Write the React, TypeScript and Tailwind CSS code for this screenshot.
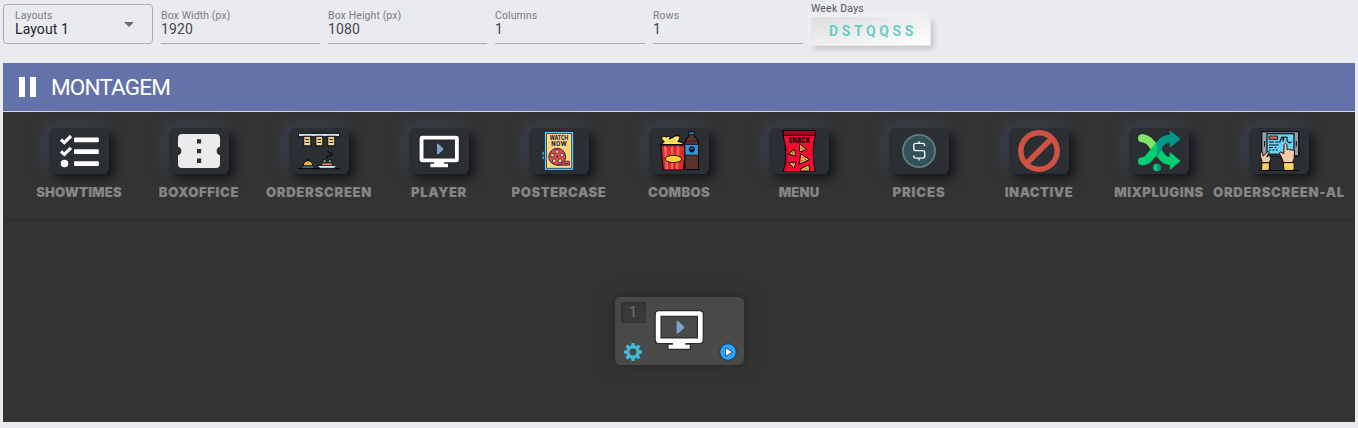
import React from 'react';

const INK = '#0b0b0d';

function Showtimes() {
  return (
    <svg viewBox="0 0 60 46" className="h-full w-full">
      <g fill="none" stroke="#fff" strokeWidth="3.2">
        <path d="M12 11.6l3.3 3L22 8" />
        <path d="M12 23.4l3.3 3L22 19.8" />
      </g>
      <circle cx="15.5" cy="35.5" r="3.8" fill="#fff" />
      <g fill="#fff">
        <rect x="25" y="9.5" width="24.8" height="4.7" rx="1" />
        <rect x="25" y="21.3" width="24.8" height="4.7" rx="1" />
        <rect x="25" y="33.2" width="24.8" height="4.8" rx="1" />
      </g>
    </svg>
  );
}

function BoxOffice() {
  return (
    <svg viewBox="0 0 60 46" className="h-full w-full">
      <path
        d="M13 6H47Q51 6 51 10V18.8A4.3 4.3 0 0 0 51 27.2V36Q51 40 47 40H13Q9 40 9 36V27.2A4.3 4.3 0 0 0 9 18.8V10Q9 6 13 6Z"
        fill="#ebebeb"
      />
      <path d="M28 11.3h4.1v4.3h-4.1zM28 21h4.1v4.2h-4.1zM28 30.6h4.1v4.3h-4.1z" fill="#2b2e33" />
    </svg>
  );
}

function OrderScreen() {
  return (
    <svg viewBox="0 0 60 46" className="h-full w-full">
      <rect x="9.5" y="5.3" width="41" height="3.4" fill="#c9dcf6" stroke={INK} strokeWidth="1" />
      {[14.8, 26.8, 38.8].map((x) => (
        <g key={x}>
          <rect x={x} y="8.3" width="7" height="9.5" fill="#f6d793" stroke={INK} strokeWidth="1" />
          <path d={`M${x + 1.7} 11.4h3.6M${x + 1.7} 14.4h3.6`} stroke={INK} strokeWidth="1" />
        </g>
      ))}
      <path d="M9 40.6h42" stroke={INK} strokeWidth="1.1" />
      <path d="M14.2 37.9a4.8 5.2 0 0 1 9.6 0z" fill="#f2b04b" stroke={INK} strokeWidth="1" />
      <path d="M19 31v2" stroke={INK} strokeWidth="1.8" />
      <path d="M13.5 38h11v2.2h-11z" fill="#3f7bb5" stroke={INK} strokeWidth=".6" />
      <path d="M32.6 34.8h10.6v3.3H32.6z" fill="#ef7d70" stroke={INK} strokeWidth=".9" />
      <circle cx="35.5" cy="33.2" r="1.7" fill="#54ae8b" stroke={INK} strokeWidth=".9" />
      <circle cx="40.8" cy="33.2" r="1.7" fill="#54ae8b" stroke={INK} strokeWidth=".9" />
      <path d="M28 37.5h20l-3 2.8H31z" fill="#d8e9fb" stroke={INK} strokeWidth=".8" />
      <path d="M39 22.5q-.5 2.5 2.5 2.3 2.8.2 1.3 2.8h-4l-1.2 2.7" fill="none" stroke={INK} strokeWidth="1.2" />
    </svg>
  );
}

function Player() {
  return (
    <svg viewBox="0 0 60 46" className="h-full w-full">
      <path
        d="M13.2 7.7H47.2Q49.8 7.7 49.8 10.3V31.6Q49.8 34.2 47.2 34.2H35.2V35.7H39V39.2H21.3V35.7H25V34.2H13.2Q10.6 34.2 10.6 31.6V10.3Q10.6 7.7 13.2 7.7ZM14.5 11.4V30.5H45.9V11.4Z"
        fill="#fff"
        fillRule="evenodd"
        stroke="#202124"
        strokeOpacity=".75"
        strokeWidth="2"
        paintOrder="stroke"
      />
      <path d="M28 15.6l1.2.2 5.1 4.8v1.2l-5.1 4.5-1.2.2z" fill="#7ba4d5" />
    </svg>
  );
}

function PosterCase() {
  const spots = [0, 72, 144, 216, 288];
  return (
    <svg viewBox="0 0 60 46" className="h-full w-full">
      <path d="M14.3 23.7v3M14.3 28.3v3" stroke="#56c7e5" strokeWidth="1.5" />
      <rect x="15.3" y="3.4" width="29.5" height="39" fill="#6ad2ef" stroke="#15294b" strokeWidth="1.1" />
      <rect x="17.5" y="5.5" width="25.2" height="34.8" fill="#ffd57b" stroke="#203252" strokeWidth=".8" />
      <g fill="#25283b" fontFamily="Inter, sans-serif" fontWeight="800" textAnchor="middle">
        <text x="30" y="12.4" fontSize="5.6" textLength="18.5" lengthAdjust="spacingAndGlyphs">WATCH</text>
        <text x="30" y="17.8" fontSize="5.6" textLength="15.5">NOW</text>
      </g>
      <path d="M29 33.2h11.5v4H28z" fill="#e94856" stroke="#252a47" strokeWidth=".8" />
      <circle cx="28.2" cy="28.7" r="8.4" fill="#ed4955" stroke="#252a47" strokeWidth="1" />
      {spots.map((a) => (
        <circle key={a} cx="28.2" cy="23.7" r="1.8" fill="#ffd57b" stroke="#252a47" strokeWidth=".8" transform={`rotate(${a} 28.2 28.7)`} />
      ))}
      <circle cx="28.2" cy="28.7" r="1" fill="#25283b" />
      <path d="M35 35.6h4" stroke="#252a47" strokeWidth=".7" />
    </svg>
  );
}

function Combos() {
  return (
    <svg viewBox="0 0 60 46" className="h-full w-full">
      <path
        d="M12 17l3-3.7-2-1.1-.6-2.8 2.3-1.5 2.8 1 2-.8 1.1 2.7 2.8-1.3 2-.8 1.6-1.3 3 .6.5 2.8-1.3 2.6 3.8 1 3 3-4.2 1.3H13z"
        fill="#ffd83c"
        stroke={INK}
        strokeWidth="1.1"
      />
      <path d="M14 10.6l3 1.3M20 9l-2.4 3.5M25 9.2l3.3 2.2M30 9.2l-3 4M17 15h3m5-1 3 2" stroke="#fff4b0" strokeWidth="1.3" />
      <path d="M11.8 16.5H37L34.4 42H14.2z" fill="#d92d2d" stroke={INK} strokeWidth="1.2" strokeLinejoin="round" />
      <path d="M14.8 17.8h3l1.5 23.4h-2.5zM21.6 17.8h2.6l-.1 23.4h-2.1zM28 17.8h2.7l-1.8 23.4h-2z" fill="#f7625c" />
      <path d="M12 16.7q2 2.5 4 .4 2 2.5 4.2 0 2 2.5 4.2 0 2 2.5 4.2 0 2 2.5 4.2 0 2 2.3 4 0" fill="none" stroke={INK} strokeWidth=".9" />
      <ellipse cx="24.4" cy="31" rx="8.2" ry="3.6" fill="#ffce32" stroke={INK} strokeWidth=".9" />
      <path d="M39.8 4h5.6v4.3q4.1 3.3 4.1 7v26.2H36V15.3q0-4 3.8-7z" fill="#5a342c" stroke={INK} strokeWidth="1.2" strokeLinejoin="round" />
      <path d="M39.8 4h5.6v2.2h-5.6z" fill="#3c93dc" stroke={INK} strokeWidth=".8" />
      <path d="M37 13.3h11.8" stroke="#342020" strokeWidth="1.2" />
      <path d="M36 16.4h13.4v10.8H36z" fill="#3b93da" stroke={INK} strokeWidth=".8" />
      <circle cx="42.8" cy="21.3" r="3.1" fill="#0e1c2c" />
      <path d="M40.8 21q1.8-1.7 3.8-.1" fill="none" stroke="#3b93da" strokeWidth=".8" />
    </svg>
  );
}

function Snack() {
  const chips = [
    'M30.6 15.6L37.8 21.6 30.5 24z',
    'M19.5 26l6-4.8 1.3 7z',
    'M31.5 25.5l9 6.2-9.900 4.400z',
    'M19.5 34.200l7.700.1-2.300 6z',
    'M31.200 41l8.800-4.200.7 6.300-8.200-.2z',
  ];
  return (
    <svg viewBox="0 0 60 46" className="h-full w-full">
      <path d="M14 2.5H46.4V7.8Q43 21 45 36L46.3 43.5H14.3L16 36Q18 21 14 7.8z" fill="#f40d31" stroke={INK} strokeWidth="1.2" />
      <path d="M14 2.5h32.4v4.8H14z" fill="#a70524" stroke={INK} strokeWidth="1.1" />
      <path d="M17.500 17q1.500 12 0 24" fill="none" stroke="#bb0625" strokeWidth="1.5" />
      <text x="30.3" y="14.700" fontFamily="Inter, sans-serif" fontSize="7.6" fontWeight="800" textAnchor="middle" textLength="21.5" lengthAdjust="spacingAndGlyphs" fill={INK}>SNACK</text>
      <g fill="#f8ae50" stroke={INK} strokeWidth="1" strokeLinejoin="round">
        {chips.map((d) => <path key={d} d={d} />)}
      </g>
      <path d="M32.4 19.5v1m2 .2v.8M23.5 24.500v1M34 29v1m2 .8v1m-2.8.2v1M24 35.3v1M37.4 39.900v1" stroke={INK} strokeWidth=".8" />
    </svg>
  );
}

function Prices() {
  return (
    <svg viewBox="0 0 60 46" className="h-full w-full">
      <circle cx="30" cy="23" r="16.1" fill="#335159" stroke="#647c80" strokeWidth="1.8" />
      <path d="M35.5 18v-1q0-1.6-1.6-1.6h-7.3q-1.8 0-1.8 1.8v3.6q0 1.8 1.8 1.8h7.3q1.8 0 1.8 1.8v3.9q0 1.8-1.8 1.8h-7.4q-1.7 0-1.7-1.7v-1M30 13.2v2.2m0 14.8v2.3" fill="none" stroke="#f2f5f5" strokeWidth="1.4" />
    </svg>
  );
}

function Inactive() {
  return (
    <svg viewBox="0 0 60 46" className="h-full w-full">
      <g fill="none" stroke="#cf5342" strokeWidth="5.5">
        <circle cx="30" cy="23" r="18.2" />
        <path d="M17.2 35.8L42.8 10.2" />
      </g>
    </svg>
  );
}

function MixPlugins() {
  return (
    <svg viewBox="0 0 60 46" className="h-full w-full">
      <path d="M12.8 10.2Q18.3 10.2 22.2 15.4L28 22.8" fill="none" stroke="#83e566" strokeWidth="8" />
      <circle cx="13" cy="10.2" r="4" fill="#83e566" />
      <path d="M28 22.8l5.2 6.2q3 3.9 7 3.9h2.5" fill="none" stroke="#06ce72" strokeWidth="7.6" />
      <path d="M41.2 24.8L51 33.1l-9.8 8z" fill="#06ce72" stroke="#06ce72" strokeWidth="1" strokeLinejoin="round" />
      <path d="M28.2 19.6L31.4 15.5q3.8-4.6 9-4.6h2" fill="none" stroke="#009987" strokeWidth="7.6" />
      <path d="M28 15v13.5l5.5-7.5z" fill="#009987" />
      <path d="M13 29.200q3 0 5-3.700L28 14v13l-4 4.500q-3.500 5.600-11 5.700z" fill="#06ce72" />
      <circle cx="13" cy="33.2" r="4" fill="#06ce72" />
      <path d="M41.2 3.2L51 11l-9.8 8z" fill="#009987" stroke="#009987" strokeWidth="1" strokeLinejoin="round" />
      <circle cx="28" cy="39.6" r="3.8" fill="#06ce72" />
      <path d="M28 35.8a3.8 3.8 0 0 1 0 7.6z" fill="#009987" />
    </svg>
  );
}

function OrderScreenAl() {
  return (
    <svg viewBox="0 0 60 46" className="h-full w-full">
      <rect x="12.7" y="3.6" width="37" height="24.3" rx="1" fill="#929ba9" stroke={INK} strokeWidth="1.2" />
      <rect x="18" y="5.7" width="27" height="20.5" fill="#68d3f2" stroke={INK} strokeWidth="1.2" />
      <path d="M15.6 13v5.6M47.3 13v5.6" stroke={INK} strokeWidth="1" />
      <path d="M20 8h8.6v3.4H20z" fill="#d95e57" stroke={INK} strokeWidth=".8" />
      <path d="M20 14h5m1.3 0h3.4M20 17h9.7M20 19.5h4m1.5 0h2M20 22h2m1.3 0h2m1.3 0h2" stroke={INK} strokeWidth="1" />
      <path d="M30.6 14.5l2.2-5.5 1.2.2v4.4l1-4.3q2.7-.7 3.2.5l-.2 3.2 2.6 1.8 2-1" fill="none" stroke={INK} strokeWidth="1.1" />
      <path d="M13.3 34.5l-2-6.4q-.6-4 .8-4.4 1.2 0 1.5 2.2l.6 2.2 4.3-4.2q1.7-1 1.8.7l-2.6 4 3.2-1.3q1.3 2.8-.2 7.3h-6.8z" fill="#f6c9a8" stroke={INK} strokeWidth="1" />
      <path d="M13 34.8h7.6l-.6 7.6h-7.6z" fill="#ffd064" stroke={INK} strokeWidth="1" />
      <path d="M34.5 34.6l-1.7-4.6-2-3.6q-.7-2.5 1-2.5l3 1.7.3-9.1q1.500-2.500 2.800 0l.2 5.200q1.500-1.200 2.500.2 1.500-1 2.500.3 1.700-.6 2.400.9l-.4 7.500-1.400 4z" fill="#f6c9a8" stroke={INK} strokeWidth="1" />
      <path d="M34.3 34.6h10.8v7.8H35z" fill="#ffd064" stroke={INK} strokeWidth="1" />
      <path d="M10 42.5h40" stroke={INK} strokeWidth="1.1" />
    </svg>
  );
}

const plugins = [
  { name: 'SHOWTIMES', Icon: Showtimes, track: 'tracking-[0.15px]' },
  { name: 'BOXOFFICE', Icon: BoxOffice, track: 'tracking-[0.65px]' },
  { name: 'ORDERSCREEN', Icon: OrderScreen, track: 'tracking-[0.7px]' },
  { name: 'PLAYER', Icon: Player, track: 'tracking-[0.6px]' },
  { name: 'POSTERCASE', Icon: PosterCase, track: 'tracking-[0.55px]' },
  { name: 'COMBOS', Icon: Combos, track: 'tracking-[0.3px]' },
  { name: 'MENU', Icon: Snack, track: 'tracking-[0.15px]' },
  { name: 'PRICES', Icon: Prices, track: 'tracking-[0.9px]' },
  { name: 'INACTIVE', Icon: Inactive, track: 'tracking-[0.45px]' },
  { name: 'MIXPLUGINS', Icon: MixPlugins, track: 'tracking-[0.5px]' },
  { name: 'ORDERSCREEN-AL', Icon: OrderScreenAl, track: 'tracking-[0.7px]' },
];

function Field({ label, value, width }: { label: string; value: string; width: string }) {
  return (
    <div className={`${width} h-10 shrink-0 border-b border-[#a9abae] pt-[6px]`}>
      <div className="text-[10.5px] leading-[12px] tracking-[0.1px] text-[#7c7d80]">{label}</div>
      <div className="-mt-px text-[14px] leading-[16px] tracking-[0.1px] text-[#46474a]">{value}</div>
    </div>
  );
}

function Gear() {
  return (
    <svg viewBox="0 0 20 20" className="h-5 w-5">
      <circle cx="10" cy="10" r="5.1" fill="none" stroke="#43b9d8" strokeWidth="3.3" />
      {[0, 45, 90, 135, 180, 225, 270, 315].map((a) => (
        <path key={a} d="M8 4.5l.5-3.5h3l.5 3.5z" fill="#43b9d8" transform={`rotate(${a} 10 10)`} />
      ))}
    </svg>
  );
}

export default function App() {
  return (
    <div className="flex h-[428px] w-[1358px] flex-col overflow-hidden bg-[#eaebef] px-[3px] font-['Roboto',sans-serif]">
      <header className="flex h-[63px] shrink-0 gap-2 pt-1">
        <div className="flex h-10 w-[150px] shrink-0 items-center justify-between rounded-[4px] border border-[#adaeb1] pr-[18px] pl-[11px]">
          <div className="-mt-px">
            <div className="text-[10.5px] leading-[12px] tracking-[0.1px] text-[#7c7d80]">Layouts</div>
            <div className="-mt-px text-[14px] leading-[16px] tracking-[0.1px] text-[#242528]">Layout 1</div>
          </div>
          <svg viewBox="0 0 10 5" className="h-[5px] w-[10px]"><path d="M0 0h10L5 5z" fill="#6c6c6f" /></svg>
        </div>
        <Field label="Box Width (px)" value="1920" width="w-[159px]" />
        <Field label="Box Height (px)" value="1080" width="w-[159px]" />
        <Field label="Columns" value="1" width="w-[150px]" />
        <Field label="Rows" value="1" width="w-[150px]" />
        <div className="-mt-[1px] w-[120px] shrink-0">
          <div className="text-[10.5px] leading-[12px] tracking-[0.2px] text-[#55575b]">Week Days</div>
          <div className="mt-[2px] flex h-[29px] items-center justify-center rounded-[2px] border-r border-b border-[#e7e7e8] bg-linear-to-br from-[#dfdfdf] to-[#fefefe] pl-[5px] text-[14px] font-bold tracking-[3.6px] text-[#68cec5] shadow-[3px_3px_5px_#c7c8ca,-2px_-2px_4px_#f5f5f7]">
            DSTQQSS
          </div>
        </div>
      </header>

      <main className="flex h-[359px] w-[1352px] flex-col bg-[#333]">
        <div className="flex h-[49px] shrink-0 items-center border-b border-[#d8d9e4] bg-[#6372a8] pl-4 text-white">
          <svg viewBox="0 0 17 20" className="h-5 w-[17px]"><path d="M0 0h6v20H0zM11 0h6v20h-6z" fill="currentColor" /></svg>
          <h1 className="ml-[15px] text-[22.5px] leading-none tracking-[-0.85px]">MONTAGEM</h1>
        </div>

        <nav className="flex h-[110px] shrink-0 border-b-3 border-[#2d3032] px-4 pt-4">
          {plugins.map(({ name, Icon, track }) => (
            <div key={name} className="flex w-[120px] shrink-0 flex-col items-center">
              <div className="h-[46px] w-[60px] rounded-[6px] bg-[#2b2e33] shadow-[5px_5px_10px_#141517,-4px_-4px_14px_#3b4350]">
                <Icon />
              </div>
              <div className={`${track} mt-[10px] font-['Inter',sans-serif] text-[13.1px] leading-4 font-black whitespace-nowrap text-[#858585]`}>{name}</div>
            </div>
          ))}
        </nav>

        <section className="flex grow justify-center pt-[75px]">
          <div className="flex h-[68px] w-[129px] rounded-[6px] bg-[#494949] pt-[5px] pl-[6px] shadow-[0_0_5px_#292929,0_0_16px_#303030]">
            <div className="flex w-[25px] shrink-0 flex-col items-center">
              <div className="flex h-[21px] w-[25px] shrink-0 items-center justify-center bg-[#393939] text-[15px] text-[#747474] shadow-[inset_1px_1px_3px_#2c2c2c]">1</div>
              <div className="mt-[19px]"><Gear /></div>
            </div>
            <div className="-ml-[3px] h-[55px] w-[72px] shrink-0"><Player /></div>
            <div className="mt-[41px] ml-[4px] h-[18px] w-[18px] shrink-0">
              <svg viewBox="0 0 18 18" className="h-full w-full">
                <circle cx="9" cy="9" r="8.3" fill="#28a4ff" stroke="#17364f" strokeWidth="1" />
                <path d="M6.5 4.8l7 4.2-7 4.3z" fill="#fff" stroke="#25343e" strokeWidth=".8" strokeLinejoin="round" />
              </svg>
            </div>
          </div>
        </section>
      </main>
    </div>
  );
}
